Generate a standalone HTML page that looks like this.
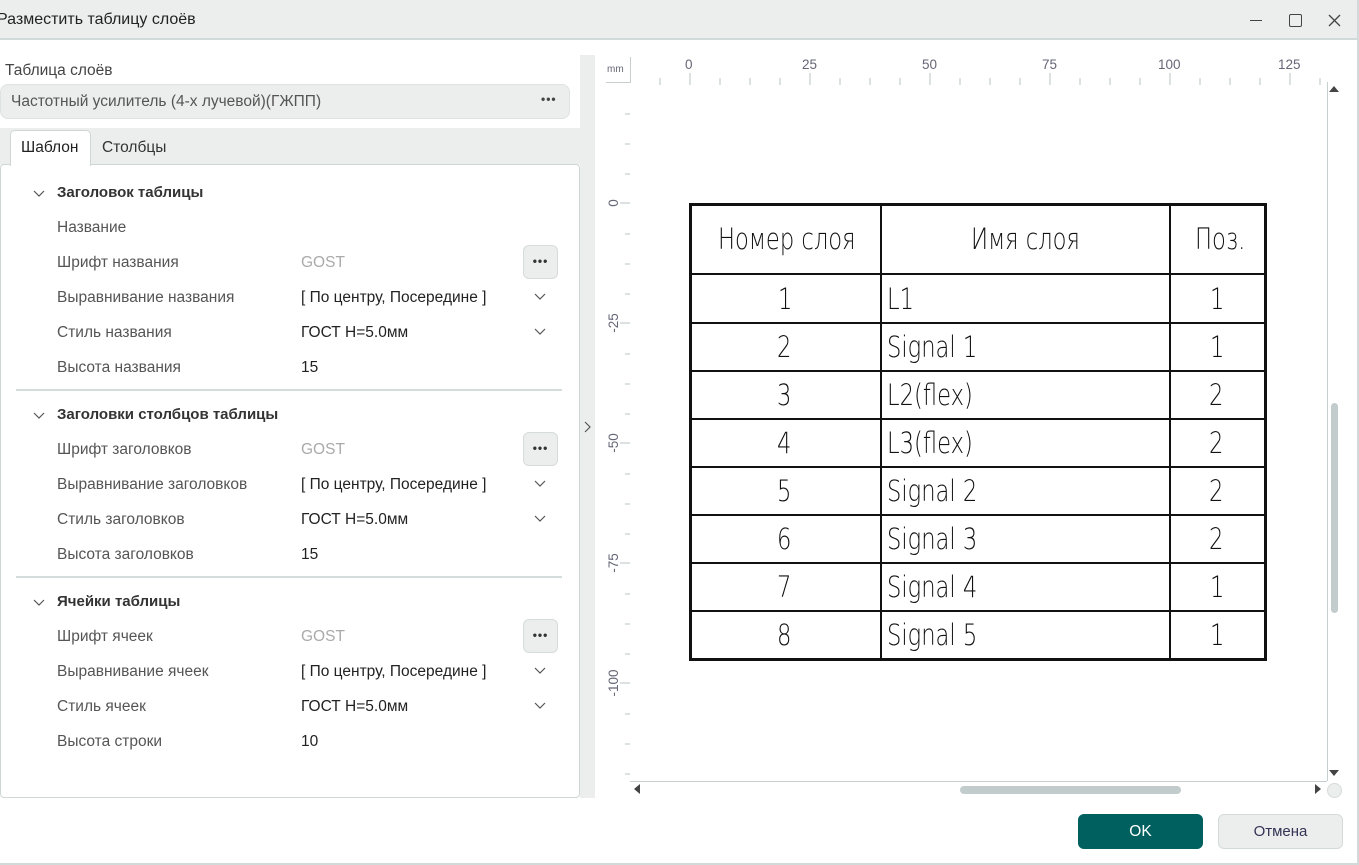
<!DOCTYPE html>
<html><head><meta charset="utf-8"><style>
*{margin:0;padding:0;box-sizing:border-box}
body{width:1359px;height:865px;position:relative;background:#fff;font-family:"Liberation Sans","DejaVu Sans",sans-serif;overflow:hidden;color:#333}
.a{position:absolute}
.t{font-size:15.5px;white-space:nowrap}
.lab{color:#555;font-size:15.5px;position:absolute;left:57px;white-space:nowrap}
.val{color:#222;font-size:15.5px;position:absolute;left:301px;white-space:nowrap}
.g{color:#aaa}
.h{position:absolute;left:57px;font-weight:bold;font-size:15px;color:#333}
.chev{position:absolute;left:33px;width:12px;height:8px}
.dd{position:absolute;left:534px;width:12px;height:8px}
.dots{position:absolute;left:523px;width:35px;height:34px;background:#eceeed;border:1px solid #d6dbdb;border-radius:6px;text-align:center;font-size:12px;line-height:31px;color:#333;letter-spacing:1px;font-weight:bold}
.sep{position:absolute;left:16px;width:546px;height:2px;background:#d4dcdc}
.rl{position:absolute;font-size:13.5px;color:#667;}
.cell{position:absolute;font-family:"DejaVu Sans","Liberation Sans Narrow",sans-serif;font-weight:200;font-size:29px;color:#111;line-height:48px;transform:scaleX(.78);transform-origin:left center;white-space:nowrap}
.hl{position:absolute;left:689px;width:578px;height:2px;background:#111}
</style></head><body>
<div class="a" style="left:0;top:0;width:1359px;height:40px;background:#eceeed;border-bottom:2px solid #d2d9d9"></div>
<div class="a t" style="left:-3px;top:11px;font-size:16px;color:#222">Разместить таблицу слоёв</div>
<div class="a" style="left:1250px;top:20px;width:12px;height:1px;background:#444"></div>
<div class="a" style="left:1289px;top:14px;width:13px;height:13px;border:1.5px solid #444;border-radius:2px"></div>
<svg class="a" style="left:1328px;top:14px" width="13" height="13"><path d="M1 1L12 12M12 1L1 12" stroke="#444" stroke-width="1.3"/></svg>
<div class="a" style="left:1357px;top:0;width:2px;height:865px;background:#d2d9d9"></div>
<div class="a" style="left:0;top:863px;width:1359px;height:2px;background:#d2d9d9"></div>
<div class="a" style="left:580px;top:55px;width:15px;height:743px;background:#eceeed"></div>
<svg class="a" style="left:584px;top:421px" width="8" height="12"><path d="M1 1L6 6L1 11" stroke="#555" fill="none" stroke-width="1.2"/></svg>
<div class="a t" style="left:5px;top:62px;color:#444">Таблица слоёв</div>
<div class="a" style="left:0;top:84px;width:570px;height:35px;background:#eceeed;border:1px solid #dde2e2;border-radius:8px"></div>
<div class="a t" style="left:11px;top:93px;color:#555">Частотный усилитель (4-х лучевой)(ГЖПП)</div>
<div class="a t" style="left:541px;top:92px;font-size:12px;font-weight:bold;color:#444;letter-spacing:1px">•••</div>
<div class="a" style="left:0;top:128px;width:580px;height:37px;background:#eceeed"></div>
<div class="a" style="left:0;top:164px;width:580px;height:634px;border:1px solid #cfd6d6;border-radius:4px;background:#fff"></div>
<div class="a" style="left:10px;top:130px;width:81px;height:36px;background:#fff;border:1px solid #cfd6d6;border-bottom:none;border-radius:5px 5px 0 0"></div>
<div class="a t" style="left:21px;top:139px;color:#222">Шаблон</div>
<div class="a t" style="left:102px;top:139px;color:#333">Столбцы</div>

<svg class="chev" style="top:190px" viewBox="0 0 12 8"><path d="M1 1L6 6L11 1" stroke="#555" fill="none" stroke-width="1.2"/></svg>
<div class="h" style="top:184px">Заголовок таблицы</div>
<div class="lab" style="top:219px">Название</div>
<div class="lab" style="top:254px">Шрифт названия</div><div class="val g" style="top:254px">GOST</div><div class="dots" style="top:245px">•••</div>
<div class="lab" style="top:289px">Выравнивание названия</div><div class="val" style="top:289px">[ По центру, Посередине ]</div><svg class="dd" style="top:293px" viewBox="0 0 12 8"><path d="M1 1L6 6L11 1" stroke="#555" fill="none" stroke-width="1.2"/></svg>
<div class="lab" style="top:324px">Стиль названия</div><div class="val" style="top:324px">ГОСТ H=5.0мм</div><svg class="dd" style="top:328px" viewBox="0 0 12 8"><path d="M1 1L6 6L11 1" stroke="#555" fill="none" stroke-width="1.2"/></svg>
<div class="lab" style="top:359px">Высота названия</div><div class="val" style="top:359px">15</div>
<div class="sep" style="top:389px"></div>

<svg class="chev" style="top:412px" viewBox="0 0 12 8"><path d="M1 1L6 6L11 1" stroke="#555" fill="none" stroke-width="1.2"/></svg>
<div class="h" style="top:406px">Заголовки столбцов таблицы</div>
<div class="lab" style="top:441px">Шрифт заголовков</div><div class="val g" style="top:441px">GOST</div><div class="dots" style="top:432px">•••</div>
<div class="lab" style="top:476px">Выравнивание заголовков</div><div class="val" style="top:476px">[ По центру, Посередине ]</div><svg class="dd" style="top:480px" viewBox="0 0 12 8"><path d="M1 1L6 6L11 1" stroke="#555" fill="none" stroke-width="1.2"/></svg>
<div class="lab" style="top:511px">Стиль заголовков</div><div class="val" style="top:511px">ГОСТ H=5.0мм</div><svg class="dd" style="top:515px" viewBox="0 0 12 8"><path d="M1 1L6 6L11 1" stroke="#555" fill="none" stroke-width="1.2"/></svg>
<div class="lab" style="top:546px">Высота заголовков</div><div class="val" style="top:546px">15</div>
<div class="sep" style="top:576px"></div>

<svg class="chev" style="top:599px" viewBox="0 0 12 8"><path d="M1 1L6 6L11 1" stroke="#555" fill="none" stroke-width="1.2"/></svg>
<div class="h" style="top:593px">Ячейки таблицы</div>
<div class="lab" style="top:628px">Шрифт ячеек</div><div class="val g" style="top:628px">GOST</div><div class="dots" style="top:619px">•••</div>
<div class="lab" style="top:663px">Выравнивание ячеек</div><div class="val" style="top:663px">[ По центру, Посередине ]</div><svg class="dd" style="top:667px" viewBox="0 0 12 8"><path d="M1 1L6 6L11 1" stroke="#555" fill="none" stroke-width="1.2"/></svg>
<div class="lab" style="top:698px">Стиль ячеек</div><div class="val" style="top:698px">ГОСТ H=5.0мм</div><svg class="dd" style="top:702px" viewBox="0 0 12 8"><path d="M1 1L6 6L11 1" stroke="#555" fill="none" stroke-width="1.2"/></svg>
<div class="lab" style="top:733px">Высота строки</div><div class="val" style="top:733px">10</div>

<div class="a" style="left:606px;top:82px;width:24px;height:1px;background:#c5cfcf"></div>
<div class="a" style="left:630px;top:57px;width:1px;height:26px;background:#c5cfcf"></div>
<div class="rl" style="left:607px;top:64px;font-size:10px">mm</div>
<div class="rl" style="left:685px;top:57px">0</div>
<div class="rl" style="left:802px;top:57px">25</div>
<div class="rl" style="left:922px;top:57px">50</div>
<div class="rl" style="left:1042px;top:57px">75</div>
<div class="rl" style="left:1158px;top:57px">100</div>
<div class="rl" style="left:1278px;top:57px">125</div>
<svg class="a" style="left:600px;top:70px" width="740" height="720">
<g stroke="#b8c4c4" stroke-width="1">
<path d="M60 8V15M90 3V15M120 8V15M150 8V15M180 8V15M210 3V15M240 8V15M270 8V15M300 8V15M330 3V15M360 8V15M390 8V15M420 8V15M450 3V15M480 8V15M510 8V15M540 8V15M570 3V15M600 8V15M630 8V15M660 8V15M690 3V15M720 8V15"/>
<path d="M25 44H30M25 74H30M25 104H30M20 133H30M25 164H30M25 194H30M25 224H30M20 253H30M25 284H30M25 314H30M25 344H30M20 373H30M25 404H30M25 434H30M25 464H30M20 493H30M25 524H30M25 554H30M25 584H30M20 613H30M25 644H30M25 674H30M25 704H30"/>
</g>
<g fill="#667" font-size="13.5" font-family="Liberation Sans" text-anchor="middle">
<text transform="translate(18,133) rotate(-90)">0</text>
<text transform="translate(18,253) rotate(-90)">-25</text>
<text transform="translate(18,373) rotate(-90)">-50</text>
<text transform="translate(18,493) rotate(-90)">-75</text>
<text transform="translate(18,613) rotate(-90)">-100</text>
</g>
</svg>
<div class="a" style="left:1327px;top:82px;width:1px;height:699px;background:#c5cfcf"></div>
<div class="a" style="left:630px;top:781px;width:697px;height:1px;background:#c5cfcf"></div>
<svg class="a" style="left:1329px;top:85px" width="10" height="8"><path d="M0 7L5 1L10 7Z" fill="#444"/></svg>
<svg class="a" style="left:1329px;top:769px" width="10" height="8"><path d="M0 1L5 7L10 1Z" fill="#444"/></svg>
<div class="a" style="left:1331px;top:403px;width:7px;height:210px;background:#c3cccc;border-radius:4px"></div>
<svg class="a" style="left:633px;top:784px" width="8" height="10"><path d="M7 0L1 5L7 10Z" fill="#444"/></svg>
<svg class="a" style="left:1314px;top:784px" width="8" height="10"><path d="M1 0L7 5L1 10Z" fill="#444"/></svg>
<div class="a" style="left:960px;top:786px;width:221px;height:8px;background:#c3cccc;border-radius:4px"></div>
<div class="a" style="left:1327px;top:783px;width:15px;height:15px;background:#eceeed;border:1px solid #d4dada;border-radius:50%"></div>

<div class="a" style="left:689px;top:203px;width:578px;height:458px;border:3px solid #111"></div>
<div class="hl" style="top:273px"></div>
<div class="hl" style="top:322px"></div>
<div class="hl" style="top:370px"></div>
<div class="hl" style="top:418px"></div>
<div class="hl" style="top:466px"></div>
<div class="hl" style="top:514px"></div>
<div class="hl" style="top:562px"></div>
<div class="hl" style="top:610px"></div>
<div class="a" style="left:880px;top:203px;width:2px;height:458px;background:#111"></div>
<div class="a" style="left:1169px;top:203px;width:2px;height:458px;background:#111"></div>
<div class="cell" style="left:718px;top:215px">Номер слоя</div>
<div class="cell" style="left:971px;top:215px">Имя слоя</div>
<div class="cell" style="left:1195px;top:215px">Поз.</div>
<div class="cell" style="left:778px;top:275px">1</div><div class="cell" style="left:887px;top:275px">L1</div><div class="cell" style="left:1210px;top:275px">1</div>
<div class="cell" style="left:777px;top:323px">2</div><div class="cell" style="left:887px;top:323px">Signal 1</div><div class="cell" style="left:1210px;top:323px">1</div>
<div class="cell" style="left:777px;top:371px">3</div><div class="cell" style="left:887px;top:371px">L2(flex)</div><div class="cell" style="left:1209px;top:371px">2</div>
<div class="cell" style="left:777px;top:419px">4</div><div class="cell" style="left:887px;top:419px">L3(flex)</div><div class="cell" style="left:1209px;top:419px">2</div>
<div class="cell" style="left:777px;top:467px">5</div><div class="cell" style="left:887px;top:467px">Signal 2</div><div class="cell" style="left:1209px;top:467px">2</div>
<div class="cell" style="left:777px;top:515px">6</div><div class="cell" style="left:887px;top:515px">Signal 3</div><div class="cell" style="left:1209px;top:515px">2</div>
<div class="cell" style="left:777px;top:563px">7</div><div class="cell" style="left:887px;top:563px">Signal 4</div><div class="cell" style="left:1210px;top:563px">1</div>
<div class="cell" style="left:777px;top:611px">8</div><div class="cell" style="left:887px;top:611px">Signal 5</div><div class="cell" style="left:1210px;top:611px">1</div>

<div class="a" style="left:1078px;top:814px;width:125px;height:35px;background:#006060;border-radius:6px;color:#fff;font-size:15.5px;text-align:center;line-height:35px">OK</div>
<div class="a" style="left:1218px;top:814px;width:125px;height:35px;background:#eceeed;border:1px solid #d4dada;border-radius:6px;color:#335;font-size:15px;text-align:center;line-height:33px">Отмена</div>
</body></html>
